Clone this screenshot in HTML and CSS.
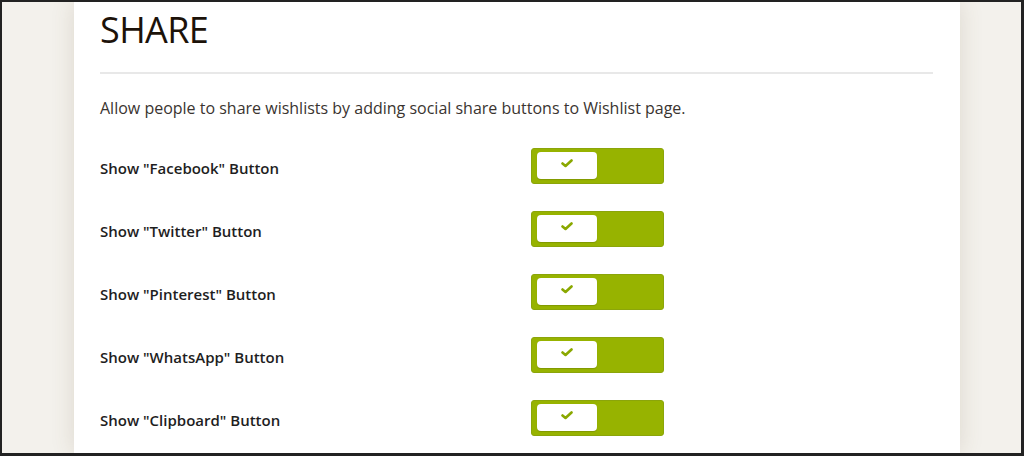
FILE: index.html
```html
<!DOCTYPE html>
<html lang="en">

<head>
    <meta charset="UTF-8">
    <meta name="viewport" content="width=device-width, initial-scale=1.0">
    <title>Share Settings</title>
    <link rel="stylesheet" href="styles.css">
</head>

<body>
    <div class="frame">
        <div class="panel">
            <h1>SHARE</h1>
            <hr class="divider">
            <p class="intro">Allow people to share wishlists by adding social share buttons to Wishlist page.</p>
            <div class="options">
                <div class="option">
                    <span class="optionLabel">Show "Facebook" Button</span>
                    <label class="toggle"><span class="knob"><svg width="12" height="9" viewBox="0 0 12 9"><polyline points="1.5,4.5 4.5,7 10.5,1.5" /></svg></span></label>
                </div>
                <div class="option">
                    <span class="optionLabel">Show "Twitter" Button</span>
                    <label class="toggle"><span class="knob"><svg width="12" height="9" viewBox="0 0 12 9"><polyline points="1.5,4.5 4.5,7 10.5,1.5" /></svg></span></label>
                </div>
                <div class="option">
                    <span class="optionLabel">Show "Pinterest" Button</span>
                    <label class="toggle"><span class="knob"><svg width="12" height="9" viewBox="0 0 12 9"><polyline points="1.5,4.5 4.5,7 10.5,1.5" /></svg></span></label>
                </div>
                <div class="option">
                    <span class="optionLabel">Show "WhatsApp" Button</span>
                    <label class="toggle"><span class="knob"><svg width="12" height="9" viewBox="0 0 12 9"><polyline points="1.5,4.5 4.5,7 10.5,1.5" /></svg></span></label>
                </div>
                <div class="option">
                    <span class="optionLabel">Show "Clipboard" Button</span>
                    <label class="toggle"><span class="knob"><svg width="12" height="9" viewBox="0 0 12 9"><polyline points="1.5,4.5 4.5,7 10.5,1.5" /></svg></span></label>
                </div>
            </div>
        </div>
    </div>
</body>

</html>
```

FILE: styles.css
```css
body {
    margin: 0;
    font-family: "Open Sans", Arial, sans-serif;
}

.frame {
    width: 1024px;
    height: 456px;
    box-sizing: border-box;
    border-style: solid;
    border-color: #222;
    border-width: 2px 3px 3px 2px;
    background: #f3f1ec;
    overflow: hidden;
    padding-left: 72px;
}

.panel {
    width: 886px;
    height: 100%;
    box-sizing: border-box;
    background: white;
    padding: 6px 27px 0 26px;
    box-shadow: 0 0 22px rgba(110, 85, 50, 0.16);
}

h1 {
    margin: 0;
    font-size: 36px;
    font-weight: 400;
    line-height: 44px;
    color: #1c1209;
    letter-spacing: -0.6px;
}

.divider {
    margin: 20px 0 0 0;
    border: none;
    height: 2px;
    background: #e8e8e8;
}

.intro {
    margin: 22px 0 0 0;
    font-size: 16px;
    line-height: 24px;
    color: #3a3430;
}

.options {
    margin-top: 28px;
    display: flex;
    flex-direction: column;
    gap: 27px;
}

.option {
    display: flex;
    align-items: center;
    height: 36px;
}

.optionLabel {
    width: 431px;
    padding-top: 4px;
    font-size: 15px;
    font-weight: 600;
    color: #1e1e1e;
}

.toggle {
    width: 133px;
    height: 36px;
    box-sizing: border-box;
    background: #97b300;
    border: 1px solid #8ba50a;
    border-radius: 3px;
    padding: 3px 0 0 5px;
    cursor: pointer;
}

.knob {
    display: flex;
    align-items: center;
    justify-content: center;
    width: 60px;
    height: 27px;
    background: white;
    border-radius: 4px;
    box-shadow: 0 1px 1px rgba(0, 0, 0, 0.15);
    padding-bottom: 4px;
    box-sizing: border-box;
}

.knob polyline {
    fill: none;
    stroke: #8aa800;
    stroke-width: 2.6;
    stroke-linecap: round;
    stroke-linejoin: round;
}
```
